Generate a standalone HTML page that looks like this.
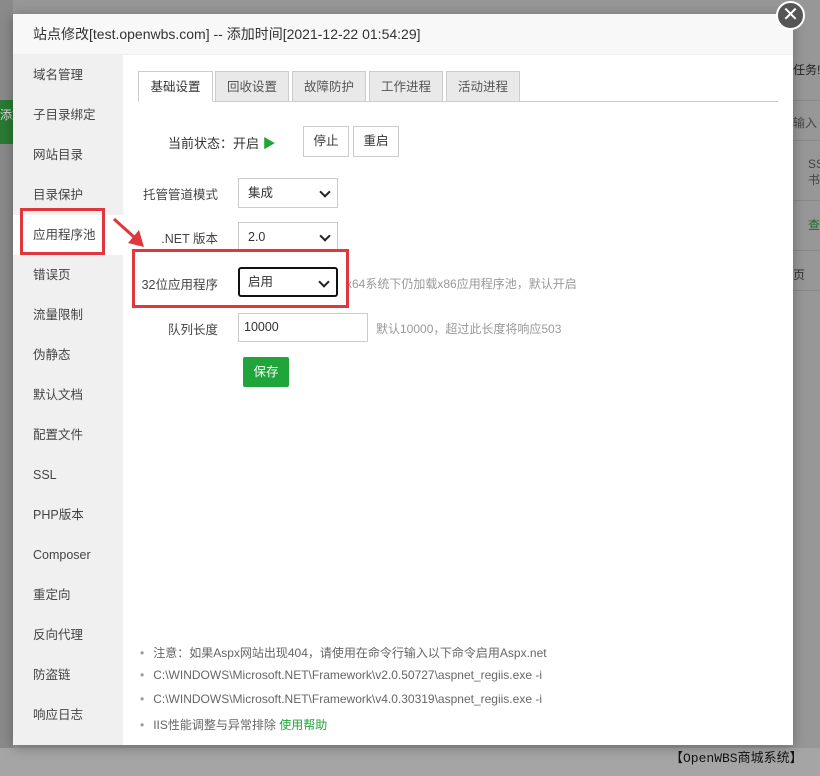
<!DOCTYPE html><html><head><meta charset="utf-8"><style>
*{margin:0;padding:0;box-sizing:border-box}
body{width:820px;height:776px;overflow:hidden;background:#979797;font-family:"Liberation Sans","Noto Sans CJK SC",sans-serif;font-size:12px;color:#333;position:relative;white-space:nowrap}
.a{position:absolute}
.side div{position:absolute;left:0;width:110px;height:40px;line-height:40px;padding-left:20px;font-size:12.5px;color:#444}
.tab{position:absolute;top:71px;height:31px;line-height:31px;text-align:center;border:1px solid #ccc;background:#e9e9e9;color:#555;font-size:12.5px}
.lbl{position:absolute;width:100px;text-align:right;left:118px;font-size:12.5px;color:#444}
.sel{position:absolute;left:238px;width:100px;height:30px;border:1px solid #ccc;background:#fff;line-height:28px;padding-left:9px;font-size:12.5px}
.sel:after{content:"";position:absolute;right:8px;top:9px;width:6px;height:6px;border-right:2px solid #222;border-bottom:2px solid #222;transform:rotate(45deg)}
.btn{position:absolute;top:126px;height:31px;width:46px;border:1px solid #ccc;background:#fff;text-align:center;line-height:29px;font-size:12.5px}
.note{position:absolute;left:140px;font-size:12px;color:#666}
.note:before{content:"•";color:#999;margin-right:9px}
</style></head><body>
<div class="a" style="left:0;top:0;width:13px;height:776px;background:#8a8a8a"></div>
<div class="a" style="left:0;top:100px;width:13px;height:44px;background:#2a7a34"></div>
<div class="a" style="left:0;top:106px;color:#ddd;font-size:12px">添加</div>
<div class="a" style="left:793px;top:61px;color:#222;font-size:12px">任务!</div>
<div class="a" style="left:793px;top:114px;color:#444;font-size:12px">输入</div>
<div class="a" style="left:808px;top:156px;color:#444;font-size:12px;line-height:16px">SS<br>书</div>
<div class="a" style="left:808px;top:216px;color:#1d6b2a;font-size:12px">查</div>
<div class="a" style="left:793px;top:266px;color:#333;font-size:12px">页</div>
<div class="a" style="left:793px;top:100px;width:27px;height:1px;background:#888"></div>
<div class="a" style="left:793px;top:140px;width:27px;height:1px;background:#888"></div>
<div class="a" style="left:793px;top:200px;width:27px;height:1px;background:#888"></div>
<div class="a" style="left:793px;top:250px;width:27px;height:1px;background:#888"></div>
<div class="a" style="left:793px;top:290px;width:27px;height:1px;background:#888"></div>
<div class="a" style="left:0;top:748px;width:820px;height:28px;background:#a5a5a5"></div>
<div class="a" style="left:670px;top:747px;font-family:'Liberation Mono','Noto Sans CJK SC',monospace;font-size:13px;color:#111">【OpenWBS商城系统】</div>
<div class="a" style="left:13px;top:14px;width:780px;height:731px;background:#fff;box-shadow:0 2px 12px rgba(0,0,0,.3)"></div>
<div class="a" style="left:13px;top:14px;width:780px;height:41px;background:#f8f8f8;border-bottom:1px solid #eee"></div>
<div class="a" style="left:33px;top:24px;font-size:14px;color:#333">站点修改[test.openwbs.com] -- 添加时间[2021-12-22 01:54:29]</div>
<div class="a" style="left:776px;top:1px;width:29px;height:29px;border-radius:50%;background:#555;border:2px solid #fff;color:#fff;text-align:center;line-height:24px;font-size:20px">✕</div>
<div class="a side" style="left:13px;top:55px;width:110px;height:690px;background:#f0f0f0">
<div style="top:0">域名管理</div><div style="top:40px">子目录绑定</div><div style="top:80px">网站目录</div><div style="top:120px">目录保护</div>
<div style="top:160px;background:#fff">应用程序池</div><div style="top:200px">错误页</div><div style="top:240px">流量限制</div><div style="top:280px">伪静态</div>
<div style="top:320px">默认文档</div><div style="top:360px">配置文件</div><div style="top:400px">SSL</div><div style="top:440px">PHP版本</div>
<div style="top:480px">Composer</div><div style="top:520px">重定向</div><div style="top:560px">反向代理</div><div style="top:600px">防盗链</div><div style="top:640px">响应日志</div>
</div>
<div class="a" style="left:138px;top:101px;width:640px;height:1px;background:#ccc"></div>
<div class="tab" style="left:138px;width:75px;background:#fff;border-bottom-color:#fff;color:#333">基础设置</div>
<div class="tab" style="left:215px;width:74px">回收设置</div>
<div class="tab" style="left:292px;width:74px">故障防护</div>
<div class="tab" style="left:369px;width:74px">工作进程</div>
<div class="tab" style="left:446px;width:74px">活动进程</div>
<div class="a" style="left:168px;top:133px;font-size:13px;color:#333">当前状态：开启 <span style="color:#20a53a">▶</span></div>
<div class="btn" style="left:303px">停止</div><div class="btn" style="left:353px">重启</div>
<div class="lbl" style="top:184px">托管管道模式</div><div class="sel" style="top:178px">集成</div>
<div class="lbl" style="top:228px">.NET 版本</div><div class="sel" style="top:222px">2.0</div>
<div class="lbl" style="top:274px">32位应用程序</div><div class="sel" style="top:267px;border:2px solid #111;border-radius:3px;line-height:26px;padding-left:8px">启用</div>
<div class="a" style="left:346px;top:275px;color:#999;font-size:12px">x64系统下仍加载x86应用程序池，默认开启</div>
<div class="lbl" style="top:319px">队列长度</div>
<div class="a" style="left:238px;top:313px;width:130px;height:29px;border:1px solid #ccc;line-height:27px;padding-left:5px;font-size:12.5px">10000</div>
<div class="a" style="left:376px;top:320px;color:#999;font-size:12px">默认10000，超过此长度将响应503</div>
<div class="a" style="left:243px;top:357px;width:46px;height:30px;background:#20a53a;border-radius:2px;color:#fff;text-align:center;line-height:30px;font-size:12.5px">保存</div>
<div class="a" style="left:20px;top:208px;width:85px;height:47px;border:3px solid #e0363e"></div>
<div class="a" style="left:132px;top:249px;width:217px;height:59px;border:3px solid #e0363e"></div>
<svg class="a" style="left:110px;top:215px" width="40" height="40"><line x1="4" y1="4" x2="24" y2="22" stroke="#e0363e" stroke-width="3"/><polygon points="18,28 34,32 29,15" fill="#e0363e"/></svg>
<div class="note" style="top:644px">注意：如果Aspx网站出现404，请使用在命令行输入以下命令启用Aspx.net</div>
<div class="note" style="top:668px">C:\WINDOWS\Microsoft.NET\Framework\v2.0.50727\aspnet_regiis.exe -i</div>
<div class="note" style="top:692px">C:\WINDOWS\Microsoft.NET\Framework\v4.0.30319\aspnet_regiis.exe -i</div>
<div class="note" style="top:716px">IIS性能调整与异常排除 <span style="color:#20a53a">使用帮助</span></div>
</body></html>
